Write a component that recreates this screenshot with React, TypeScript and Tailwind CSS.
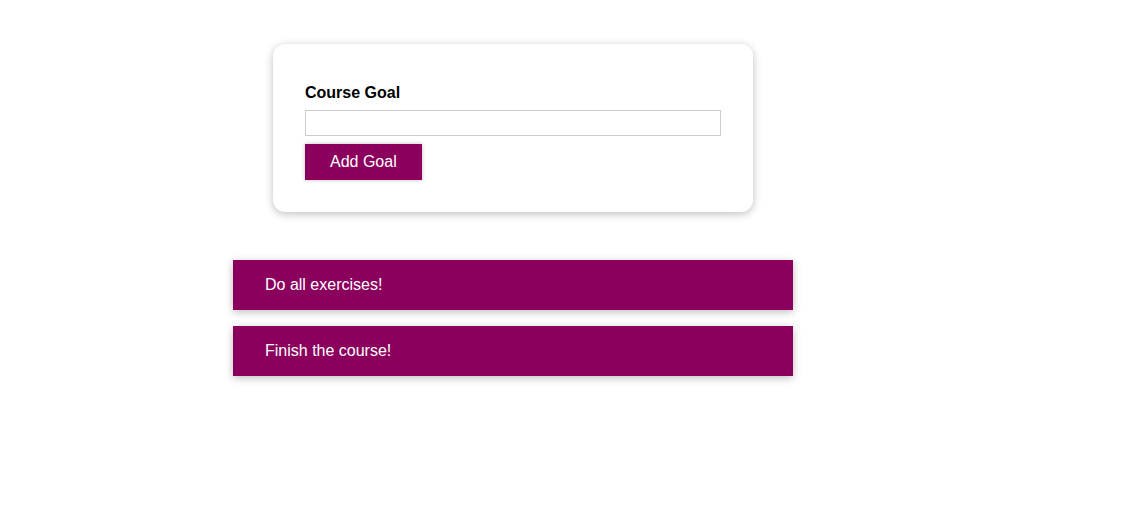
export default function App() {
  const goals = ["Do all exercises!", "Finish the course!"];
  return (
    <div className="min-h-[515px] bg-white font-['Liberation_Sans',Arial,sans-serif] text-[16px] text-black">
      <div className="w-[1026px] pt-[44px]">
        <section className="mx-auto w-[480px] rounded-[12px] bg-white p-8 shadow-[0_2px_8px_rgba(0,0,0,0.26)]">
          <form onSubmit={(e) => e.preventDefault()}>
            <div className="my-2">
              <label className="mb-2 block font-bold leading-[18px]">Course Goal</label>
              <input
                type="text"
                className="block h-[26px] w-full border border-[#ccc] px-1 leading-6 outline-none"
              />
            </div>
            <button
              type="submit"
              className="h-[36px] border border-[#8b005d] bg-[#8b005d] px-6 leading-[18px] text-white shadow-[0_0_4px_rgba(0,0,0,0.26)]"
            >
              Add Goal
            </button>
          </form>
        </section>
        <section className="mx-auto mt-12 w-[560px]">
          <ul className="flex flex-col gap-4">
            {goals.map((g) => (
              <li
                key={g}
                className="h-[50px] bg-[#8b005d] px-8 py-4 leading-[18px] text-white shadow-[0_2px_8px_rgba(0,0,0,0.26)]"
              >
                {g}
              </li>
            ))}
          </ul>
        </section>
      </div>
    </div>
  );
}
